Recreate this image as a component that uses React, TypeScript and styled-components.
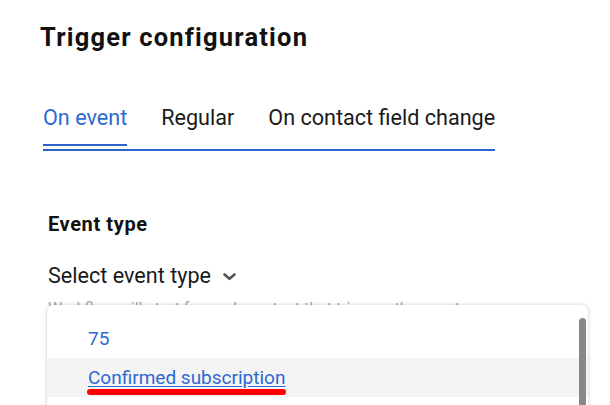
import React from 'react';
import styled, { createGlobalStyle } from 'styled-components';

const GlobalStyle = createGlobalStyle`
  html, body {
    margin: 0;
    padding: 0;
    background: #fff;
    overflow: hidden;
  }
  body {
    font-family: Roboto, "Liberation Sans", Arial, sans-serif;
    color: #1a1a1a;
  }
`;

const tabs = ['On event', 'Regular', 'On contact field change'];
const events = ['75', 'Confirmed subscription'];

const App: React.FC = () => {
  return (
    <Page>
      <GlobalStyle />
      <Title>Trigger configuration</Title>
      <TabList>
        {tabs.map((tab, i) => (
          <Tab key={tab} active={i === 0}>{tab}</Tab>
        ))}
      </TabList>
      <Field>
        <Label>Event type</Label>
        <SelectButton>
          Select event type
          <Chevron viewBox="0 0 13 8">
            <path d="M1.5 1.5 L6.5 5.8 L11.5 1.5" />
          </Chevron>
        </SelectButton>
        <Hint>Workflow will start for each contact that triggers the event</Hint>
        <Menu>
          {events.map((ev, i) => (
            <Option key={ev} highlighted={i === 1}>
              <OptionText highlighted={i === 1}>
                {ev}
                {i === 1 && <Mark />}
              </OptionText>
            </Option>
          ))}
          <ScrollThumb />
        </Menu>
      </Field>
    </Page>
  );
};

const Page = styled.main`
  height: 405px;
  padding: 22px 0 0 40px;
  box-sizing: border-box;
  overflow: hidden;
`;

const Title = styled.h1`
  margin: 0;
  font-size: 25.5px;
  line-height: 30px;
  font-weight: 700;
  letter-spacing: 1.2px;
  color: #111;
`;

const TabList = styled.div`
  display: inline-flex;
  gap: 34px;
  margin: 54px 0 0 3px;
  border-bottom: 2px solid #2b64cc;
`;

const Tab = styled.div<{ active?: boolean }>`
  position: relative;
  padding: 0 0 19px;
  font-size: 21.6px;
  line-height: 24px;
  color: ${({ active }) => (active ? '#2e69d3' : '#1a1a1a')};

  &::after {
    content: '';
    display: ${({ active }) => (active ? 'block' : 'none')};
    position: absolute;
    left: 0;
    right: 0;
    bottom: 3px;
    height: 2px;
    background: #2b64cc;
  }
`;

const Field = styled.section`
  position: relative;
  margin: 61px 0 0 8px;
`;

const Label = styled.div`
  font-size: 20px;
  line-height: 24px;
  font-weight: 700;
  letter-spacing: 0.6px;
  color: #111;
`;

const SelectButton = styled.div`
  display: flex;
  align-items: center;
  gap: 12px;
  margin-top: 27px;
  font-size: 21.6px;
  line-height: 26px;
  color: #1a1a1a;
`;

const Chevron = styled.svg`
  width: 13px;
  height: 8px;
  margin-top: 2px;
  fill: none;
  stroke: #555;
  stroke-width: 2.6;
  stroke-linecap: round;
  stroke-linejoin: round;
`;

const Hint = styled.div`
  margin-top: 10px;
  font-size: 16px;
  line-height: 20px;
  color: #a8a8a8;
  white-space: nowrap;
`;

const Menu = styled.div`
  position: absolute;
  top: 93px;
  left: -1px;
  width: 541px;
  height: 160px;
  padding-top: 14px;
  box-sizing: border-box;
  background: #fff;
  border-radius: 6px;
  box-shadow: 0 0 4px rgba(0, 0, 0, 0.18), 0 1px 2px rgba(0, 0, 0, 0.08);
  overflow: hidden;
`;

const Option = styled.div<{ highlighted?: boolean }>`
  height: 39px;
  display: flex;
  align-items: center;
  padding-left: 41px;
  background: ${({ highlighted }) => (highlighted ? '#f4f4f4' : '#fff')};
`;

const OptionText = styled.span<{ highlighted?: boolean }>`
  position: relative;
  font-size: 19px;
  line-height: 22px;
  color: #2e69d3;
  text-decoration: ${({ highlighted }) => (highlighted ? 'underline' : 'none')};
  text-underline-offset: 2px;
`;

const Mark = styled.span`
  position: absolute;
  left: -1px;
  right: -1px;
  bottom: -6px;
  height: 6px;
  border-radius: 3px;
  background: #ff0000;
`;

const ScrollThumb = styled.div`
  position: absolute;
  top: 13px;
  right: 2px;
  width: 7px;
  height: 200px;
  border-radius: 4px;
  background: #888;
`;

export default App;
